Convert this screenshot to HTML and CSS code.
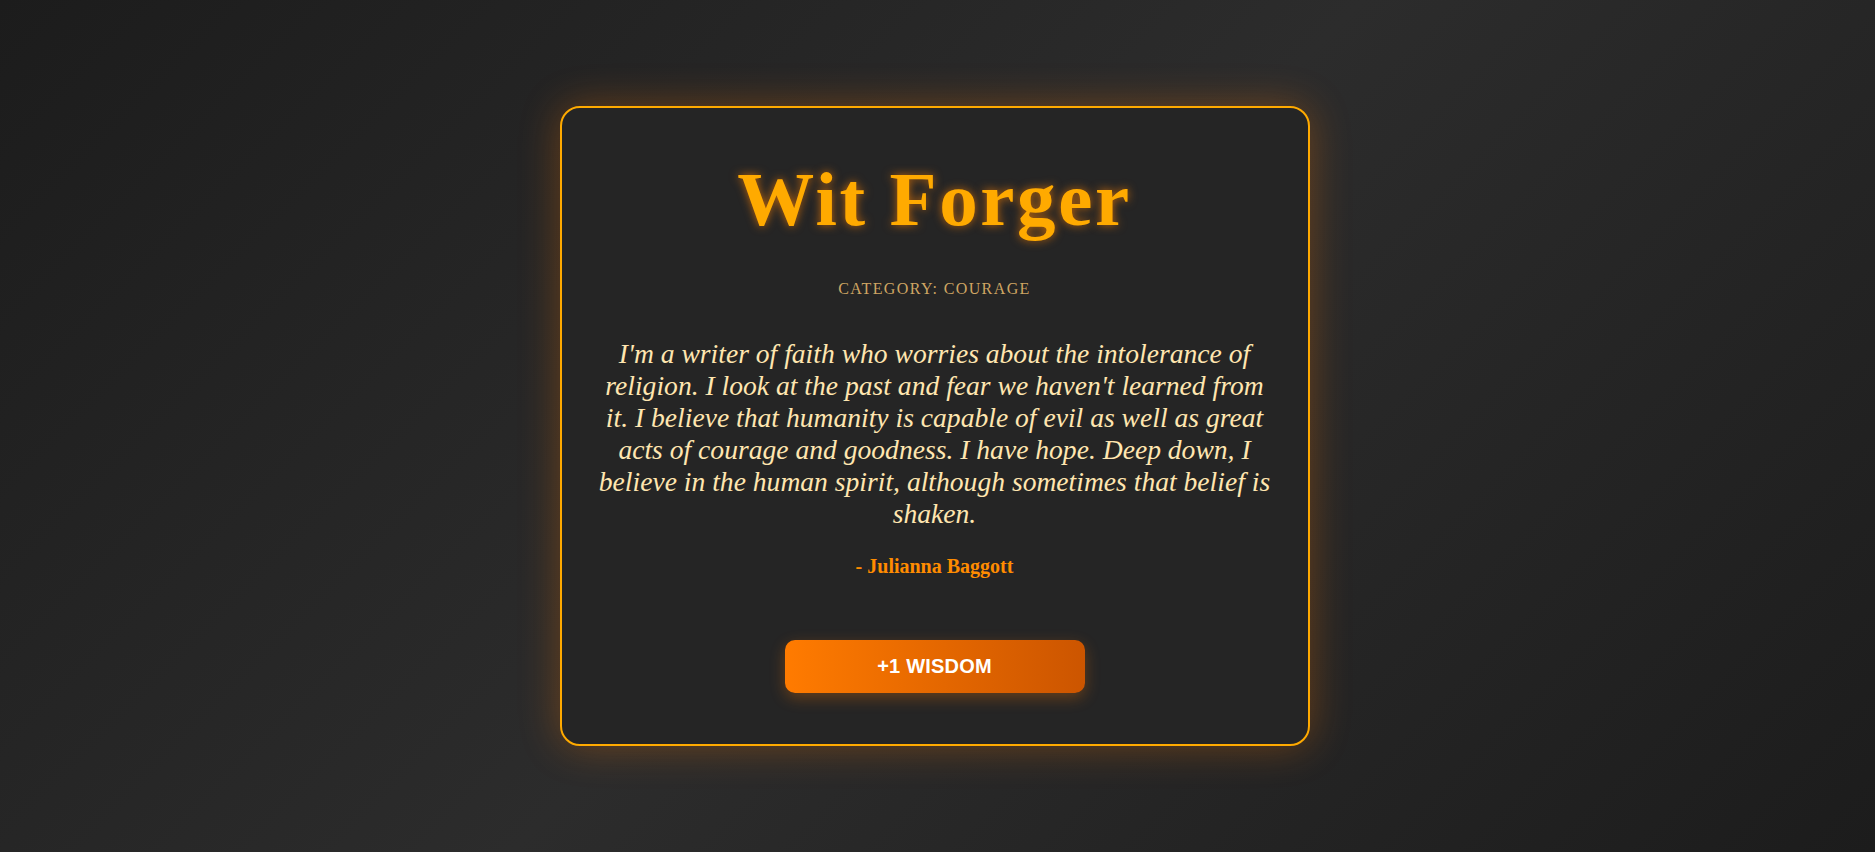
FILE: index.html
```html
<!DOCTYPE html>
<html lang="en">
<head>
<meta charset="utf-8">
<title>Wit Forger</title>
<link rel="stylesheet" href="styles.css">
</head>
<body>
  <main class="card">
    <h1 class="title">Wit Forger</h1>
    <div class="category">Category: Courage</div>
    <blockquote class="quote">I'm a writer of faith who worries about the intolerance of religion. I look at the past and fear we haven't learned from it. I believe that humanity is capable of evil as well as great acts of courage and goodness. I have hope. Deep down, I believe in the human spirit, although sometimes that belief is shaken.</blockquote>
    <div class="author">- Julianna Baggott</div>
    <button class="wisdom-btn" type="button">+1 Wisdom</button>
  </main>
</body>
</html>
```

FILE: styles.css
```css
* { box-sizing: border-box; }

html, body {
  margin: 0;
  height: 100%;
}

body {
  font-family: "Liberation Serif", "Times New Roman", serif;
  background: linear-gradient(135deg, #1c1c1c 0%, #2c2c2c 50%, #1c1c1c 100%);
  display: flex;
  align-items: center;
  justify-content: center;
  min-height: 852px;
  padding-right: 6px;
}

.card {
  width: 750px;
  height: 640px;
  background: #252525;
  border: 2px solid #ffaa00;
  border-radius: 20px;
  box-shadow: 0 0 40px rgba(255, 120, 0, 0.32);
  padding: 47px 32px 0;
  display: flex;
  flex-direction: column;
  align-items: center;
  text-align: center;
}

.title {
  margin: 0;
  font-size: 77px;
  font-weight: bold;
  color: #ffaa00;
  letter-spacing: 2.6px;
  text-shadow: 0 0 10px rgba(255, 130, 0, 0.7);
}

.category {
  margin-top: 36px;
  font-size: 16px;
  letter-spacing: 1.4px;
  text-transform: uppercase;
  color: #cfa563;
}

.quote {
  margin: 40px 0 0;
  font-size: 27.6px;
  line-height: 32px;
  font-style: italic;
  color: #ffe6b0;
}

.author {
  margin-top: 25px;
  font-size: 20px;
  font-weight: bold;
  color: #ff8c00;
}

.wisdom-btn {
  margin-top: 62px;
  width: 300px;
  height: 53px;
  border: none;
  border-radius: 10px;
  background: linear-gradient(90deg, #ff7b00, #cc5500);
  color: #fff;
  font-family: "Liberation Sans", Arial, sans-serif;
  font-size: 20px;
  font-weight: bold;
  letter-spacing: 0.2px;
  text-transform: uppercase;
  box-shadow: 0 5px 15px rgba(255, 123, 0, 0.3);
  cursor: pointer;
}
```
